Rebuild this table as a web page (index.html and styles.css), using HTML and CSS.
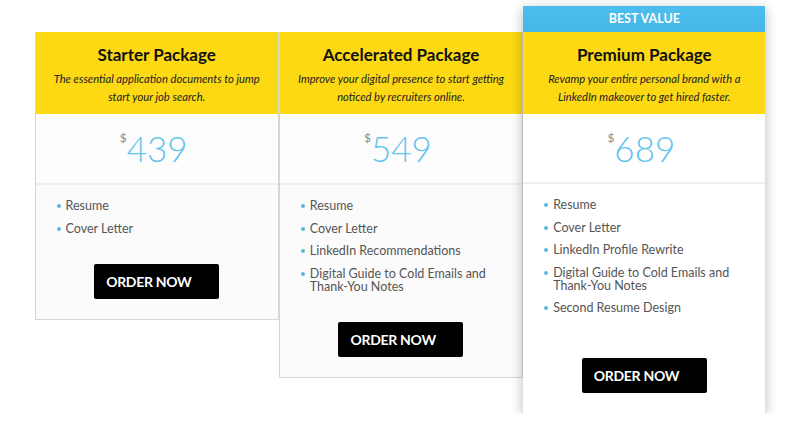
FILE: index.html
```html
<!DOCTYPE html>
<html>
<head>
<meta charset="utf-8">
<link rel="stylesheet" href="styles.css">
</head>
<body>
<div class="pricing">
  <div class="card">
    <div class="head">
      <h2 class="title">Starter Package</h2>
      <p class="desc">The essential application documents to jump start your job search.</p>
    </div>
    <div class="price"><span class="cur">$</span><span class="amt">439</span></div>
    <div class="body">
      <ul class="feats">
        <li>Resume</li>
        <li>Cover Letter</li>
      </ul>
      <a class="btn">ORDER NOW</a>
    </div>
  </div>
  <div class="card">
    <div class="head">
      <h2 class="title">Accelerated Package</h2>
      <p class="desc">Improve your digital presence to start getting noticed by recruiters online.</p>
    </div>
    <div class="price"><span class="cur">$</span><span class="amt">549</span></div>
    <div class="body">
      <ul class="feats">
        <li>Resume</li>
        <li>Cover Letter</li>
        <li>LinkedIn Recommendations</li>
        <li>Digital Guide to Cold Emails and Thank-You Notes</li>
      </ul>
      <a class="btn">ORDER NOW</a>
    </div>
  </div>
  <div class="card featured">
    <div class="badge">BEST VALUE</div>
    <div class="head">
      <h2 class="title">Premium Package</h2>
      <p class="desc">Revamp your entire personal brand with a LinkedIn makeover to get hired faster.</p>
    </div>
    <div class="price"><span class="cur">$</span><span class="amt">689</span></div>
    <div class="body">
      <ul class="feats">
        <li>Resume</li>
        <li>Cover Letter</li>
        <li>LinkedIn Profile Rewrite</li>
        <li>Digital Guide to Cold Emails and Thank-You Notes</li>
        <li>Second Resume Design</li>
      </ul>
      <a class="btn">ORDER NOW</a>
    </div>
  </div>
</div>
</body>
</html>
```

FILE: styles.css
```css
html, body {
  margin: 0;
  padding: 0;
  background: #fff;
}
body {
  font-family: Lato, "Open Sans", sans-serif;
  color: #222;
}
.pricing {
  width: 731px;
  margin: 32px auto 0;
  display: flex;
  align-items: flex-start;
}
.card {
  flex: 1 1 0;
  background: #fbfbfb;
  border: 1px solid #d6d6d6;
  border-top: none;
  box-sizing: border-box;
}
.card + .card {
  border-left: none;
}
.card:nth-child(2) {
  border-left: 1px solid #d6d6d6;
}
.featured {
  margin-top: -26px;
  background: #fff;
  border: none;
  box-shadow: 0 3px 12px rgba(0,0,0,0.28);
  position: relative;
  z-index: 1;
}
.badge {
  height: 26px;
  line-height: 26px;
  text-align: center;
  color: #fff;
  font-weight: 700;
  font-size: 12.5px;
  background: linear-gradient(#4dbfef, #45b6e6);
}
.head {
  background: #fcd912;
  height: 82px;
  box-sizing: border-box;
  padding: 12px 10px 0;
  text-align: center;
}
.title {
  margin: 0;
  font-size: 17px;
  font-weight: 700;
  line-height: 22px;
  color: #111;
}
.desc {
  margin: 4px 0 0;
  font-style: italic;
  font-size: 11.2px;
  line-height: 18px;
  color: #222;
}
.price {
  height: 71px;
  box-sizing: border-box;
  border-bottom: 2px solid #eeeeee;
  display: flex;
  justify-content: center;
  align-items: flex-start;
  padding-top: 14px;
  padding-right: 6px;
  background: #fdfdfd;
}
.featured .price {
  background: #fff;
  height: 70px;
}
.cur {
  font-size: 12px;
  color: #888;
  font-weight: 400;
  margin-top: 2px;
  margin-right: 0;
}
.amt {
  font-size: 35px;
  font-weight: 300;
  color: #62c4ec;
  line-height: 40px;
}
.body {
  padding: 14px 20px 20px 20px;
  display: flex;
  flex-direction: column;
}
.feats {
  list-style: none;
  margin: 0;
  padding: 0;
}
.feats li {
  position: relative;
  padding-left: 10px;
  font-size: 12.5px;
  line-height: 13px;
  color: #555;
  margin-bottom: 9.5px;
}
.feats li::before {
  content: "";
  position: absolute;
  left: 1px;
  top: 5px;
  width: 4px;
  height: 4px;
  border-radius: 50%;
  background: #5ab9e0;
}
.btn {
  align-self: center;
  margin-top: 19.5px;
  width: 125px;
  height: 35px;
  line-height: 35px;
  box-sizing: border-box;
  padding-left: 12px;
  background: #000;
  color: #fff;
  font-weight: 700;
  font-size: 14px;
  text-align: left;
  border-radius: 2px;
  letter-spacing: -0.3px;
}
.featured .btn {
  margin-top: 34px;
}
```
